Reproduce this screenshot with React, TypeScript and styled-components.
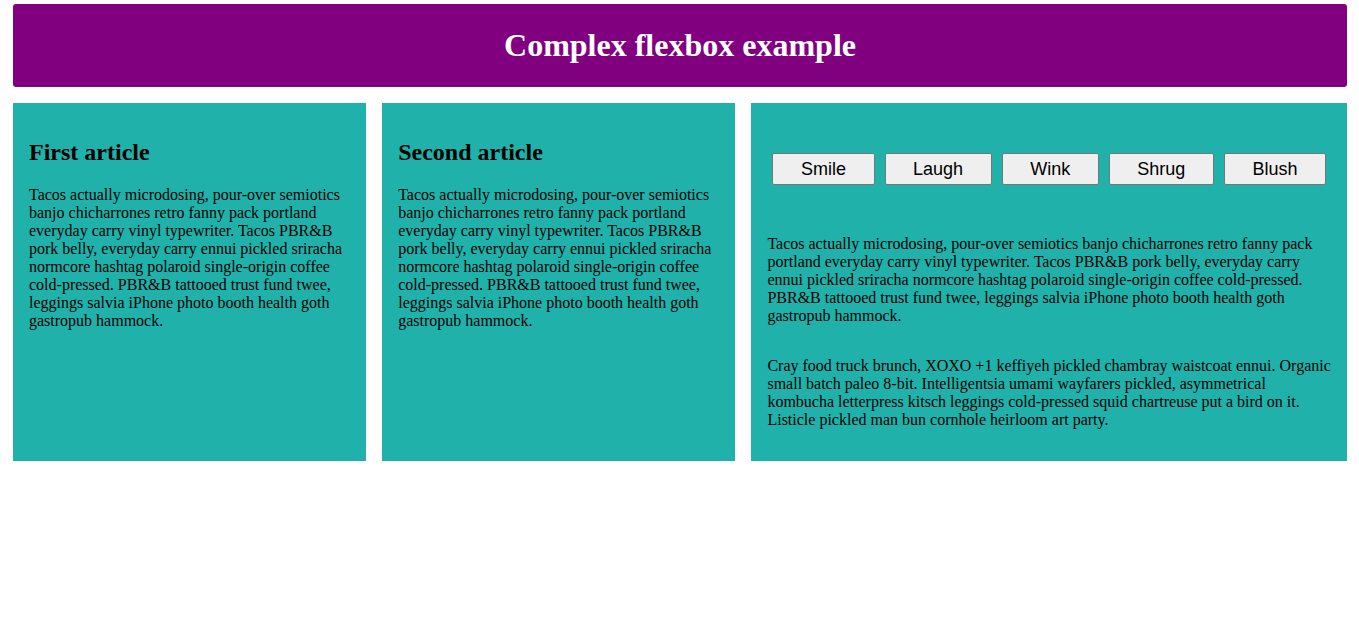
import React from "react";
import styled, { createGlobalStyle } from "styled-components";

const GlobalStyle = createGlobalStyle`
  html, body {
    margin: 0;
    padding: 0;
    background: #ffffff;
  }
  body {
    font-family: "Liberation Serif", "Times New Roman", serif;
    color: #000000;
  }
`;

const Page = styled.div`
  padding: 4px 12px 0 13px;
  display: flex;
  flex-direction: column;
  gap: 16px;
`;

const Header = styled.header`
  background: #800080;
  height: 83px;
  border-radius: 3px;
`;

const Title = styled.h1`
  margin: 0;
  text-align: center;
  color: #ffffff;
  font-size: 32px;
  font-weight: bold;
  line-height: 83px;
`;

const Section = styled.section`
  display: flex;
  gap: 16px;
  align-items: stretch;
`;

const Article = styled.article<{ $grow?: number; $column?: boolean }>`
  flex: ${(p) => p.$grow ?? 1} 1 200px;
  padding: 16px;
  background: #20b2aa;
  display: ${(p) => (p.$column ? "flex" : "block")};
  flex-direction: column;
  min-width: 0;
`;

const Heading = styled.h2`
  font-size: 24px;
  font-weight: bold;
  margin: 20px 0;
`;

const Para = styled.p`
  font-size: 16px;
  margin: 16px 0;
`;

const ButtonRow = styled.div`
  flex: 1 1 100px;
  display: flex;
  flex-flow: row wrap;
  align-items: center;
  justify-content: space-around;
`;

const Button = styled.button`
  flex: 1 1 auto;
  margin: 5px;
  font-family: "Liberation Sans", Arial, sans-serif;
  font-size: 18px;
  line-height: 1.5;
  height: 32px;
  padding: 1px 6px;
  color: #000000;
  background: #efefef;
  border: 1px solid #767676;
  border-radius: 2px;
`;

const TextBlock = styled.div`
  display: flex;
  flex-direction: column;
`;

const text1 =
  "Tacos actually microdosing, pour-over semiotics banjo chicharrones retro fanny pack portland everyday carry vinyl typewriter. Tacos PBR&B pork belly, everyday carry ennui pickled sriracha normcore hashtag polaroid single-origin coffee cold-pressed. PBR&B tattooed trust fund twee, leggings salvia iPhone photo booth health goth gastropub hammock.";
const text2 =
  "Cray food truck brunch, XOXO +1 keffiyeh pickled chambray waistcoat ennui. Organic small batch paleo 8-bit. Intelligentsia umami wayfarers pickled, asymmetrical kombucha letterpress kitsch leggings cold-pressed squid chartreuse put a bird on it. Listicle pickled man bun cornhole heirloom art party.";

const buttons = ["Smile", "Laugh", "Wink", "Shrug", "Blush"];

export default function App() {
  return (
    <>
      <GlobalStyle />
      <Page>
        <Header>
          <Title>Complex flexbox example</Title>
        </Header>
        <Section>
          <Article>
            <Heading>First article</Heading>
            <Para>{text1}</Para>
          </Article>
          <Article>
            <Heading>Second article</Heading>
            <Para>{text1}</Para>
          </Article>
          <Article $grow={3} $column>
            <ButtonRow>
              {buttons.map((b) => (
                <Button key={b}>{b}</Button>
              ))}
            </ButtonRow>
            <TextBlock>
              <Para>{text1}</Para>
              <Para>{text2}</Para>
            </TextBlock>
          </Article>
        </Section>
      </Page>
    </>
  );
}
